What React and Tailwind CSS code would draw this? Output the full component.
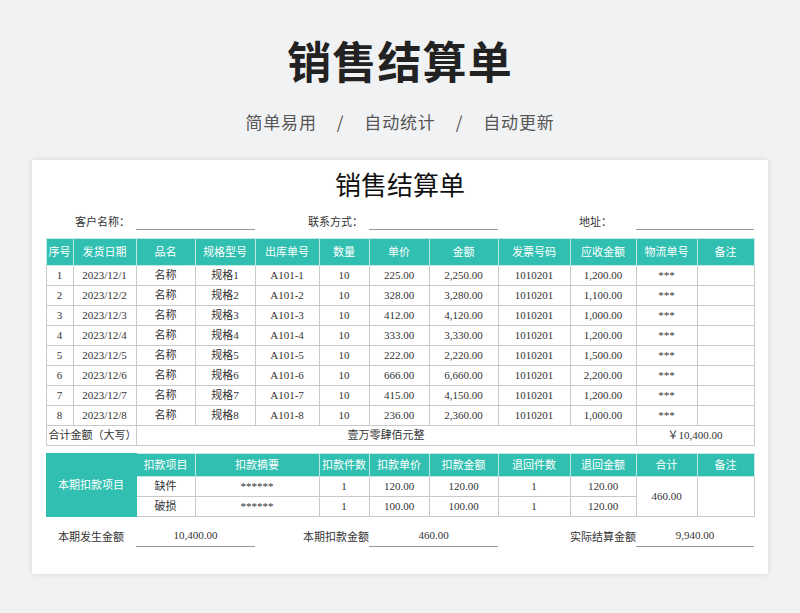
import React from "react";

const cols = [27, 63, 59, 60, 64, 50, 60, 69, 72, 66, 61, 57];
const grid = "grid grid-cols-[27px_63px_59px_60px_64px_50px_60px_69px_72px_66px_61px_57px]";
const heads = ["序号", "发货日期", "品名", "规格型号", "出库单号", "数量", "单价", "金额", "发票号码", "应收金额", "物流单号", "备注"];
const rows = [
  ["225.00", "2,250.00", "1,200.00"],
  ["328.00", "3,280.00", "1,100.00"],
  ["412.00", "4,120.00", "1,000.00"],
  ["333.00", "3,330.00", "1,200.00"],
  ["222.00", "2,220.00", "1,500.00"],
  ["666.00", "6,660.00", "2,200.00"],
  ["415.00", "4,150.00", "1,200.00"],
  ["236.00", "2,360.00", "1,000.00"],
];

const th = "border border-[#bfe9e4] bg-[#31bfb1] text-white font-normal";
const td = "border border-[#c9c9c9] text-center";

const Cols = () => (
  <colgroup>
    {cols.map((w, i) => (
      <col key={i} style={{ width: w }} />
    ))}
  </colgroup>
);

export default function App() {
  return (
    <div
      className="w-[800px] h-[613px] bg-[#f1f2f4] flex flex-col items-center overflow-hidden"
      style={{ fontFamily: '"Noto Sans CJK SC", sans-serif' }}
    >
      <h1 className="mt-[32px] text-[44px] leading-[56px] font-bold text-[#222] tracking-wide">销售结算单</h1>
      <p className="mt-[22px] text-[17px] leading-6 text-[#555] tracking-wider">
        简单易用<span className="mx-5">/</span>自动统计<span className="mx-5">/</span>自动更新
      </p>
      <div
        className="mt-[26px] w-[736px] h-[414px] bg-white shadow-[0_0_6px_rgba(0,0,0,0.12)] flex flex-col items-center text-[11px] text-[#333]"
        style={{ fontFamily: '"Liberation Serif", "Noto Sans CJK SC", serif' }}
      >
        <div className="mt-[6px] text-[26px] leading-9 text-[#111]" style={{ fontFamily: '"Noto Sans CJK SC", sans-serif' }}>
          销售结算单
        </div>
        <div className={`${grid} mt-[10px] h-[24px] items-end pb-[6px]`}>
          <div className="col-span-2 text-right pr-[6px]">客户名称：</div>
          <div className="col-span-2 border-b border-[#999] h-[14px]" />
          <div className="col-span-2 text-right pr-[6px]">联系方式：</div>
          <div className="col-span-2 border-b border-[#999] h-[14px]" />
          <div className="col-span-2 text-right pr-[24px]">地址：</div>
          <div className="col-span-2 border-b border-[#999] h-[14px]" />
        </div>
        <table className="table-fixed border-collapse w-[708px] mt-[2px]">
          <Cols />
          <thead>
            <tr className="h-[27px]">
              {heads.map((h) => (
                <th key={h} className={th}>{h}</th>
              ))}
            </tr>
          </thead>
          <tbody>
            {rows.map((r, i) => (
              <tr key={i} className="h-[20px]">
                <td className={td}>{i + 1}</td>
                <td className={td}>2023/12/{i + 1}</td>
                <td className={td}>名称</td>
                <td className={td}>规格{i + 1}</td>
                <td className={td}>A101-{i + 1}</td>
                <td className={td}>10</td>
                <td className={td}>{r[0]}</td>
                <td className={td}>{r[1]}</td>
                <td className={td}>1010201</td>
                <td className={td}>{r[2]}</td>
                <td className={td}>***</td>
                <td className={td}></td>
              </tr>
            ))}
            <tr className="h-[20px]">
              <td colSpan={2} className={`${td} text-left pl-[2px] whitespace-nowrap`}>合计金额（大写）</td>
              <td colSpan={8} className={td}>壹万零肆佰元整</td>
              <td colSpan={2} className={td}>￥10,400.00</td>
            </tr>
          </tbody>
        </table>
        <table className="table-fixed border-collapse w-[708px] mt-[7px]">
          <Cols />
          <tbody>
            <tr className="h-[23px]">
              <td colSpan={2} rowSpan={3} className="border border-[#31bfb1] bg-[#31bfb1] text-white text-center">本期扣款项目</td>
              <td className={th + " text-center"}>扣款项目</td>
              <td colSpan={2} className={th + " text-center"}>扣款摘要</td>
              <td className={th + " text-center"}>扣款件数</td>
              <td className={th + " text-center"}>扣款单价</td>
              <td className={th + " text-center"}>扣款金额</td>
              <td className={th + " text-center"}>退回件数</td>
              <td className={th + " text-center"}>退回金额</td>
              <td className={th + " text-center"}>合计</td>
              <td className={th + " text-center"}>备注</td>
            </tr>
            <tr className="h-[20px]">
              <td className={td}>缺件</td>
              <td colSpan={2} className={td}>******</td>
              <td className={td}>1</td>
              <td className={td}>120.00</td>
              <td className={td}>120.00</td>
              <td className={td}>1</td>
              <td className={td}>120.00</td>
              <td rowSpan={2} className={td}>460.00</td>
              <td rowSpan={2} className={td}></td>
            </tr>
            <tr className="h-[20px]">
              <td className={td}>破损</td>
              <td colSpan={2} className={td}>******</td>
              <td className={td}>1</td>
              <td className={td}>100.00</td>
              <td className={td}>100.00</td>
              <td className={td}>1</td>
              <td className={td}>120.00</td>
            </tr>
          </tbody>
        </table>
        <div className={`${grid} mt-[10px] h-[20px] items-center`}>
          <div className="col-span-2 text-center">本期发生金额</div>
          <div className="col-span-2 text-center border-b border-[#999] h-[20px]">10,400.00</div>
          <div className="col-span-2 text-right">本期扣款金额</div>
          <div className="col-span-2 text-center border-b border-[#999] h-[20px]">460.00</div>
          <div className="col-span-2 text-right">实际结算金额</div>
          <div className="col-span-2 text-center border-b border-[#999] h-[20px]">9,940.00</div>
        </div>
      </div>
    </div>
  );
}
